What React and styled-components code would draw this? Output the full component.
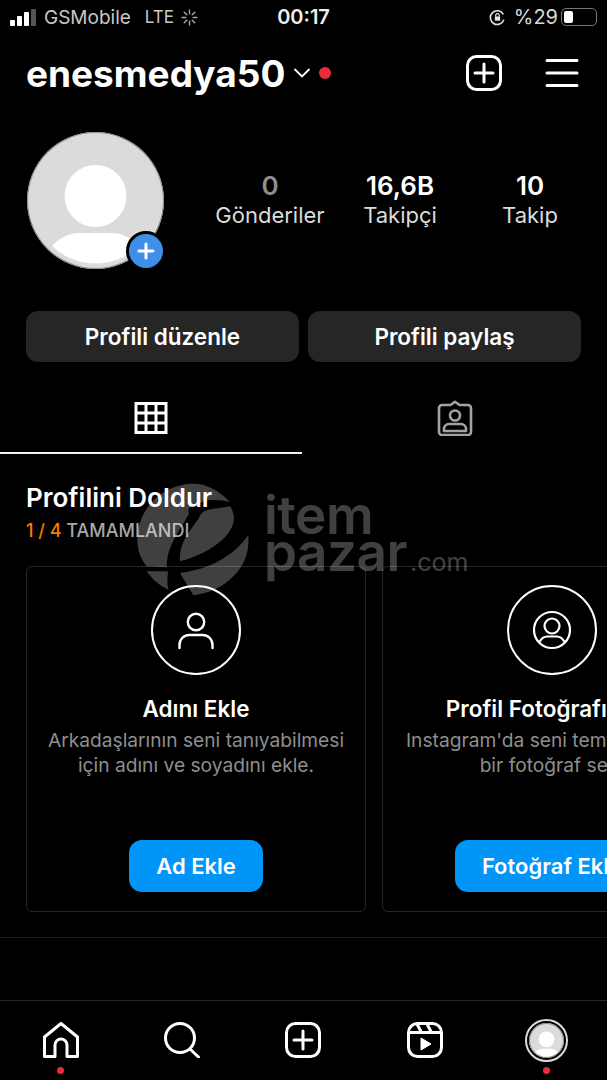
import styled, { createGlobalStyle } from 'styled-components';

const GlobalStyle = createGlobalStyle`
  html, body {
    margin: 0;
    background: #000;
  }
  * {
    box-sizing: border-box;
  }
`;

const stats = [
  { value: '0', label: 'Gönderiler', dim: true },
  { value: '16,6B', label: 'Takipçi' },
  { value: '10', label: 'Takip' },
];

function PersonIcon() {
  return (
    <svg width="40" height="40" viewBox="0 0 40 40" fill="none" stroke="#fff" strokeWidth="2.4">
      <circle cx="20" cy="12" r="8.2" />
      <path d="M3.5 38v-3c0-6 4.5-10 10-10h13c5.500 0 10 4 10 10v3" strokeLinecap="round" />
    </svg>
  );
}

function PersonCircleIcon() {
  return (
    <svg width="40" height="40" viewBox="0 0 40 40" fill="none" stroke="#fff" strokeWidth="2.2">
      <circle cx="20" cy="20" r="18" />
      <circle cx="20" cy="16" r="7.500" />
      <path d="M7.500 32c2-4 5-5.500 8-5.500h9c3 0 6 1.500 8 5.500" />
    </svg>
  );
}

function PlusSquareIcon({ size }) {
  return (
    <svg width={size} height={size} viewBox="0 0 36 36" fill="none" stroke="#fff" strokeWidth="3" strokeLinecap="round">
      <rect x="1.500" y="1.500" width="33" height="33" rx="9" />
      <path d="M18 9v18M9 18h18" />
    </svg>
  );
}

function AvatarArt() {
  return (
    <AvatarFigure viewBox="0 0 137 137">
      <clipPath id="avatar-clip">
        <circle cx="68.500" cy="68.500" r="63" />
      </clipPath>
      <circle cx="68.500" cy="64" r="31" fill="#fff" />
      <path
        d="M18 125C26 108 40 101 52 101h33c12 0 26 7 34 24v12H18z"
        fill="#fff"
        clipPath="url(#avatar-clip)"
      />
    </AvatarFigure>
  );
}

const cards = [
  {
    title: 'Adını Ekle',
    text: ['Arkadaşlarının seni tanıyabilmesi', 'için adını ve soyadını ekle.'],
    action: 'Ad Ekle',
    icon: <PersonIcon />,
  },
  {
    title: 'Profil Fotoğrafı Ekle',
    text: ["Instagram'da seni temsil edecek", 'bir fotoğraf seç.'],
    action: 'Fotoğraf Ekle',
    icon: <PersonCircleIcon />,
  },
];

const App = () => (
  <Page>
    <GlobalStyle />
    <StatusBar>
      <StatusLeft>
        <SignalBars>
          <Bar $h={6} />
          <Bar $h={10} />
          <Bar $h={14} />
          <Bar $h={17} $off />
        </SignalBars>
        <Carrier $gap={7}>GSMobile</Carrier>
        <Carrier $size={17}>LTE</Carrier>
        <svg width="17" height="17" viewBox="0 0 16 16" stroke="#aaa" strokeWidth="1.300" strokeLinecap="round">
          <path d="M8 1v3.500M8 11.500V15M1 8h3.500M11.500 8H15M3 3l2.500 2.500M10.500 10.500 13 13M13 3l-2.500 2.500M5.500 10.500 3 13" />
        </svg>
      </StatusLeft>
      <Clock>00:17</Clock>
      <StatusRight>
        <svg width="17" height="17" viewBox="0 0 16 16" fill="none" stroke="#e4e4e4" strokeWidth="1.500">
          <path d="M13.500 5A6.500 6.500 0 1 0 14 10" />
          <rect x="5.500" y="7" width="5" height="4" fill="#e4e4e4" stroke="none" />
          <path d="M6.300 7V6a1.700 1.700 0 0 1 3.400 0v1" strokeWidth="1.100" />
        </svg>
        <Battery>
          <span>%29</span>
          <BatteryShell>
            <BatteryLevel />
          </BatteryShell>
        </Battery>
      </StatusRight>
    </StatusBar>

    <Header>
      <NameGroup>
        <Username>enesmedya50</Username>
        <svg width="18" height="10" viewBox="0 0 18 10" fill="none" stroke="#fff" strokeWidth="1.800" strokeLinecap="round">
          <path d="M2 1.500 9 8.500l7-7" />
        </svg>
        <RedDot $size={12} />
      </NameGroup>
      <HeaderActions>
        <PlusSquareIcon size={36} />
        <svg width="34" height="28" viewBox="0 0 34 28" stroke="#fff" strokeWidth="3" strokeLinecap="round">
          <path d="M2 1.500h30M2 14h30M2 26.500h30" />
        </svg>
      </HeaderActions>
    </Header>

    <ProfileRow>
      <AvatarWrap>
        <Avatar $size={137}>
          <AvatarArt />
        </Avatar>
        <AddBadge>
          <svg width="18" height="18" viewBox="0 0 18 18" stroke="#fff" strokeWidth="3" strokeLinecap="round">
            <path d="M9 2v14M2 9h14" />
          </svg>
        </AddBadge>
      </AvatarWrap>
      <Stats>
        {stats.map((s) => (
          <Stat key={s.label}>
            <StatValue $dim={s.dim}>{s.value}</StatValue>
            <StatLabel>{s.label}</StatLabel>
          </Stat>
        ))}
      </Stats>
    </ProfileRow>

    <ButtonRow>
      <GreyButton>Profili düzenle</GreyButton>
      <GreyButton>Profili paylaş</GreyButton>
    </ButtonRow>

    <Tabs>
      <Tab $active>
        <svg width="34" height="32" viewBox="0 0 34 32" fill="none" stroke="#fff" strokeWidth="3">
          <rect x="2" y="1.500" width="30" height="29" />
          <path d="M12 1.500v29M22 1.500v29M2 11h30M2 21h30" />
        </svg>
      </Tab>
      <Tab>
        <svg width="36" height="36" viewBox="0 0 36 36" fill="none" stroke="#a3a3a3" strokeWidth="2.600" strokeLinejoin="round">
          <path d="M5 5h8.500L18 1.800 22.500 5H31a3 3 0 0 1 3 3v24a3 3 0 0 1-3 3H5a3 3 0 0 1-3-3V8a3 3 0 0 1 3-3z" />
          <circle cx="18" cy="15.500" r="5" />
          <path d="M7 31v-2c0-3 2.500-5 5-5h12c2.500 0 5 2 5 5v2z" />
        </svg>
      </Tab>
    </Tabs>

    <Section>
      <SectionTitle>Profilini Doldur</SectionTitle>
      <Progress>
        <em>1 / 4</em> TAMAMLANDI
      </Progress>
    </Section>

    <CardRail>
      {cards.map((c) => (
        <Card key={c.title}>
          <IconRing>{c.icon}</IconRing>
          <CardTitle>{c.title}</CardTitle>
          <CardText>
            {c.text.map((line) => (
              <span key={line}>{line}</span>
            ))}
          </CardText>
          <BlueButton>{c.action}</BlueButton>
        </Card>
      ))}
    </CardRail>

    <Divider />
    <Spacer />

    <BottomNav>
      <NavItem>
        <svg width="36" height="36" viewBox="0 0 36 36" fill="none" stroke="#fff" strokeWidth="3" strokeLinejoin="round">
          <path d="M1.500 34.500V15L18 1.500 34.500 15v19.500H24V23a6 6 0 0 0-12 0v11.500z" />
        </svg>
        <RedDot $size={7} />
      </NavItem>
      <NavItem>
        <svg width="36" height="36" viewBox="0 0 36 36" fill="none" stroke="#fff" strokeWidth="3" strokeLinecap="round">
          <circle cx="16" cy="16" r="14.500" />
          <path d="M26 27l8.500 8" />
        </svg>
        <RedDot $hidden $size={7} />
      </NavItem>
      <NavItem>
        <PlusSquareIcon size={36} />
        <RedDot $hidden $size={7} />
      </NavItem>
      <NavItem>
        <svg width="36" height="36" viewBox="0 0 36 36" fill="none" stroke="#fff" strokeWidth="3" strokeLinejoin="round">
          <rect x="1.500" y="1.500" width="33" height="33" rx="9" />
          <path d="M2 10.500h32M10 2l4.500 8.500M20 2l4.500 8.500" />
          <path d="M14 16l10 6-10 6z" fill="#fff" strokeWidth="1" />
        </svg>
        <RedDot $hidden $size={7} />
      </NavItem>
      <NavItem>
        <NavAvatar>
          <Avatar $size={35}>
            <AvatarArt />
          </Avatar>
        </NavAvatar>
        <RedDot $size={7} />
      </NavItem>
    </BottomNav>

    <Watermark>
      <svg width="130" height="125" viewBox="0 0 390 375" fill="#fff">
        <path d="M300 72C270 40 232 17 190 17 98 17 22 92 22 185c0 29 10 58 28 80l60 3c0-24 4-44 12-62 12-30 34-62 58-104 16-24 40-34 64-36 20-1 38 1 56 6z" />
        <path d="M300 85c12 18 15 36 8 56-8 24-30 48-68 72-26 16-58 28-90 37-2-20 2-40 12-62 10-20 24-38 42-64 6-10 10-22 22-26 24-7 50-8 74-13z" />
        <path d="M355 170c4 50-12 92-44 124-30 32-74 52-121 58l-40-67c38-6 78-16 112-34 38-20 72-48 93-81z" />
        <path d="M50 280l65 0c-4 18-4 38 0 55-26-12-48-30-65-55z" />
        <circle cx="192" cy="100" r="17" fill="#000" />
      </svg>
      <WatermarkWords>
        <WatermarkBrand>item</WatermarkBrand>
        <WatermarkBrand>
          pazar<small>.com</small>
        </WatermarkBrand>
      </WatermarkWords>
    </Watermark>
  </Page>
);

export default App;

const Page = styled.div`
  position: relative;
  width: 607px;
  height: 1080px;
  overflow: hidden;
  display: flex;
  flex-direction: column;
  background: #000;
  color: #fff;
  font-family: Inter, 'Liberation Sans', sans-serif;
`;

const StatusBar = styled.div`
  height: 34px;
  padding: 0 10px;
  display: grid;
  grid-template-columns: 1fr auto 1fr;
  align-items: center;
`;

const StatusLeft = styled.div`
  display: flex;
  align-items: center;
  gap: 7px;
`;

const SignalBars = styled.div`
  display: flex;
  align-items: flex-end;
  gap: 2px;
  margin-right: 1px;
`;

const Bar = styled.i`
  width: 5px;
  height: ${({ $h }) => $h}px;
  border-radius: 1px;
  background: ${({ $off }) => ($off ? '#555' : '#fff')};
`;

const Carrier = styled.span`
  font-size: ${({ $size }) => $size || 19}px;
  color: #c8c8c8;
  margin-right: ${({ $gap }) => $gap || 0}px;
`;

const Clock = styled.span`
  font-size: 20px;
  font-weight: 600;
  color: #eee;
`;

const StatusRight = styled.div`
  display: flex;
  justify-content: flex-end;
  align-items: center;
  gap: 8px;
`;

const Battery = styled.div`
  display: flex;
  align-items: center;
  gap: 3px;
  font-size: 20px;
  color: #d8d8d8;
`;

const BatteryShell = styled.div`
  width: 36px;
  height: 18px;
  padding: 2px;
  border: 1px solid #777;
  border-radius: 5px;
`;

const BatteryLevel = styled.div`
  width: 9px;
  height: 100%;
  background: #fff;
  border-radius: 2px;
`;

const Header = styled.div`
  margin-top: 16px;
  height: 46px;
  padding: 0 28px 0 26px;
  display: flex;
  justify-content: space-between;
  align-items: center;
`;

const NameGroup = styled.div`
  display: flex;
  align-items: center;
  gap: 8px;
`;

const Username = styled.h1`
  margin: 0;
  font-size: 37px;
  font-weight: 700;
`;

const RedDot = styled.span`
  display: block;
  flex: none;
  width: ${({ $size }) => $size}px;
  height: ${({ $size }) => $size}px;
  border-radius: 50%;
  background: ${({ $hidden }) => ($hidden ? 'transparent' : '#ee2b3c')};
`;

const HeaderActions = styled.div`
  display: flex;
  align-items: center;
  gap: 43px;
`;

const ProfileRow = styled.div`
  margin-top: 36px;
  padding-left: 27px;
  display: flex;
  align-items: center;
`;

const AvatarWrap = styled.div`
  position: relative;
  width: 137px;
  height: 137px;
  flex: none;
`;

const Avatar = styled.div`
  width: ${({ $size }) => $size}px;
  height: ${({ $size }) => $size}px;
  border-radius: 50%;
  overflow: hidden;
  background: #dbdbdb;
  box-shadow: inset 0 0 0 1px #8a8a8a;
`;

const AvatarFigure = styled.svg`
  display: block;
  width: 100%;
  height: 100%;
`;

const AddBadge = styled.div`
  position: absolute;
  right: -2px;
  bottom: -2px;
  width: 40px;
  height: 40px;
  border: 3px solid #000;
  border-radius: 50%;
  background: #3e8fea;
  display: flex;
  align-items: center;
  justify-content: center;
`;

const Stats = styled.div`
  margin-left: 51px;
  display: flex;
  gap: 20px;
  margin-top: -3px;
`;

const Stat = styled.div`
  width: 110px;
  display: flex;
  flex-direction: column;
  align-items: center;
  gap: 1px;
`;

const StatValue = styled.span`
  font-size: 26px;
  font-weight: 600;
  color: ${({ $dim }) => ($dim ? '#8e8e8e' : '#fff')};
`;

const StatLabel = styled.span`
  font-size: 22px;
  color: #dcdcdc;
  white-space: nowrap;
`;

const ButtonRow = styled.div`
  margin-top: 42px;
  padding: 0 26px;
  display: grid;
  grid-template-columns: 273px 273px;
  gap: 9px;
`;

const GreyButton = styled.div`
  height: 51px;
  border-radius: 12px;
  background: #262626;
  display: flex;
  align-items: center;
  justify-content: center;
  font-size: 22.5px;
  font-weight: 600;
`;

const Tabs = styled.div`
  margin-top: 23px;
  display: grid;
  grid-template-columns: 302px 1fr;
`;

const Tab = styled.div`
  height: 69px;
  padding-bottom: 1px;
  display: flex;
  align-items: center;
  justify-content: center;
  border-bottom: 2px solid ${({ $active }) => ($active ? '#f2f2f2' : 'transparent')};
`;

const Section = styled.div`
  margin-top: 28px;
  padding-left: 26px;
`;

const SectionTitle = styled.h2`
  margin: 0;
  font-size: 26px;
  line-height: 31px;
  font-weight: 600;
`;

const Progress = styled.div`
  margin-top: 8px;
  font-size: 18px;
  line-height: 20px;
  font-weight: 500;
  color: #a8a8a8;

  em {
    font-style: normal;
    color: #f57c00;
  }
`;

const CardRail = styled.div`
  margin-top: 25px;
  padding-left: 26px;
  display: flex;
  gap: 16px;
`;

const Card = styled.div`
  flex: none;
  width: 340px;
  height: 346px;
  padding: 18px 0 19px;
  border: 1px solid #262626;
  border-radius: 6px;
  display: flex;
  flex-direction: column;
  align-items: center;
`;

const IconRing = styled.div`
  width: 90px;
  height: 90px;
  border: 2.5px solid #fff;
  border-radius: 50%;
  display: flex;
  align-items: center;
  justify-content: center;
`;

const CardTitle = styled.div`
  margin-top: 21px;
  font-size: 22.5px;
  line-height: 26px;
  font-weight: 600;
  white-space: nowrap;
`;

const CardText = styled.div`
  margin-top: 6px;
  font-size: 19.2px;
  line-height: 24.5px;
  color: #8e8e8e;
  text-align: center;
  white-space: nowrap;

  span {
    display: block;
  }
`;

const BlueButton = styled.div`
  margin-top: auto;
  height: 52px;
  padding: 0 27px;
  border-radius: 13px;
  background: #0095f6;
  display: flex;
  align-items: center;
  font-size: 22px;
  font-weight: 600;
  white-space: nowrap;
`;

const Divider = styled.div`
  margin-top: 25px;
  height: 1px;
  background: #1c1c1c;
`;

const Spacer = styled.div`
  flex: 1;
`;

const BottomNav = styled.nav`
  height: 80px;
  border-top: 1px solid #262626;
  display: grid;
  grid-template-columns: repeat(5, 1fr);
`;

const NavItem = styled.div`
  padding-top: 21px;
  display: flex;
  flex-direction: column;
  align-items: center;
  gap: 9px;
`;

const NavAvatar = styled.div`
  margin: -3px 0 -4px;
  width: 43px;
  height: 43px;
  padding: 2px;
  border: 2px solid #dbdbdb;
  border-radius: 50%;
`;

const Watermark = styled.div`
  position: absolute;
  left: 130px;
  top: 478px;
  display: flex;
  gap: 4px;
  opacity: 0.25;
  pointer-events: none;
`;

const WatermarkWords = styled.div`
  margin-top: 19px;
`;

const WatermarkBrand = styled.div`
  font-size: 53px;
  font-weight: 600;
  line-height: 37px;
  letter-spacing: -0.5px;
  white-space: nowrap;

  small {
    font-size: 25px;
    font-weight: 400;
    letter-spacing: 0;
    margin-left: 3px;
  }
`;
